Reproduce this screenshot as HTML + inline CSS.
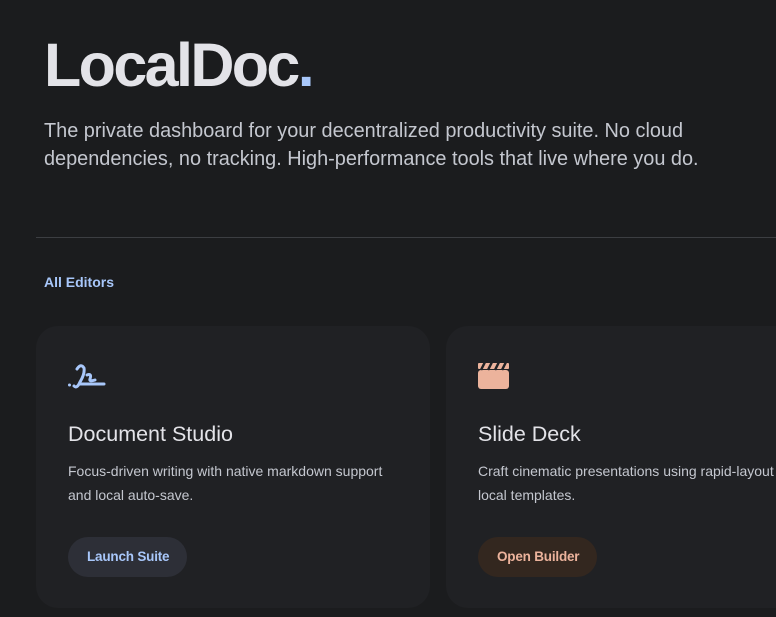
<!DOCTYPE html>
<html><head><meta charset="utf-8"><style>
*{margin:0;padding:0;box-sizing:border-box}
html,body{width:776px;height:617px;overflow:hidden;background:#1b1c1e;font-family:"Liberation Sans",sans-serif;position:relative}
.logo{position:absolute;left:44px;top:30px;font-size:61px;font-weight:bold;color:#e3e3e8;letter-spacing:-2.6px;line-height:70px}
.logo span{color:#a8c7fa}
.lead{position:absolute;left:44px;top:117px;font-size:19.9px;line-height:28px;color:#c4c7cf;width:730px}
.hr{position:absolute;left:36px;top:237px;width:740px;height:1px;background:#3c3e42}
.tab{position:absolute;left:44px;top:274px;font-size:14px;font-weight:bold;color:#a8c7fa}
.card{position:absolute;top:326px;width:394px;height:282px;background:#202124;border-radius:22px}
.card h3{position:absolute;left:32px;top:96px;font-size:21.5px;font-weight:normal;color:#e3e3e8}
.card p{position:absolute;left:32px;top:133px;font-size:14px;line-height:24px;color:#c4c7cf;width:360px;white-space:nowrap}
.btn{position:absolute;left:32px;top:211px;height:40px;border-radius:20px;font-size:13.5px;font-weight:bold;line-height:40px;padding:0 18px 0 19px;letter-spacing:-0.2px}
.icon{position:absolute;left:31px;top:35px}
</style></head><body>
<div class="logo">LocalDoc<span>.</span></div>
<div class="lead">The private dashboard for your decentralized productivity suite. No cloud dependencies, no tracking. High-performance tools that live where you do.</div>
<div class="hr"></div>
<div class="tab">All Editors</div>
<div class="card" style="left:36px">
<svg class="icon" width="40" height="32" viewBox="0 0 40 32"><g fill="none" stroke="#a8c7fa" stroke-width="3" stroke-linecap="round"><path d="M10 8 Q14 2 17 7 Q18 13 13 21 Q10 28 7 25"/><path d="M20 14 Q25 12 23 18 Q22 21 28 19"/><path d="M13 23 H37"/></g><circle cx="2.5" cy="24" r="1.5" fill="#a8c7fa"/></svg>
<h3>Document Studio</h3>
<p>Focus-driven writing with native markdown support<br>and local auto-save.</p>
<div class="btn" style="background:#2d2f37;color:#a8c7fa">Launch Suite</div>
</div>
<div class="card" style="left:446px">
<svg class="icon" width="34" height="30" viewBox="0 0 34 30"><rect x="1" y="9" width="31" height="19" rx="3" fill="#ecb39c"/><rect x="1" y="2" width="31" height="6" rx="1" fill="#ecb39c"/><g stroke="#202124" stroke-width="2.5"><path d="M8 1 L4 9 M15 1 L11 9 M22 1 L18 9 M29 1 L25 9"/></g></svg>
<h3>Slide Deck</h3>
<p>Craft cinematic presentations using rapid-layout<br>local templates.</p>
<div class="btn" style="background:#33271f;color:#ecb39c">Open Builder</div>
</div>
</body></html>
